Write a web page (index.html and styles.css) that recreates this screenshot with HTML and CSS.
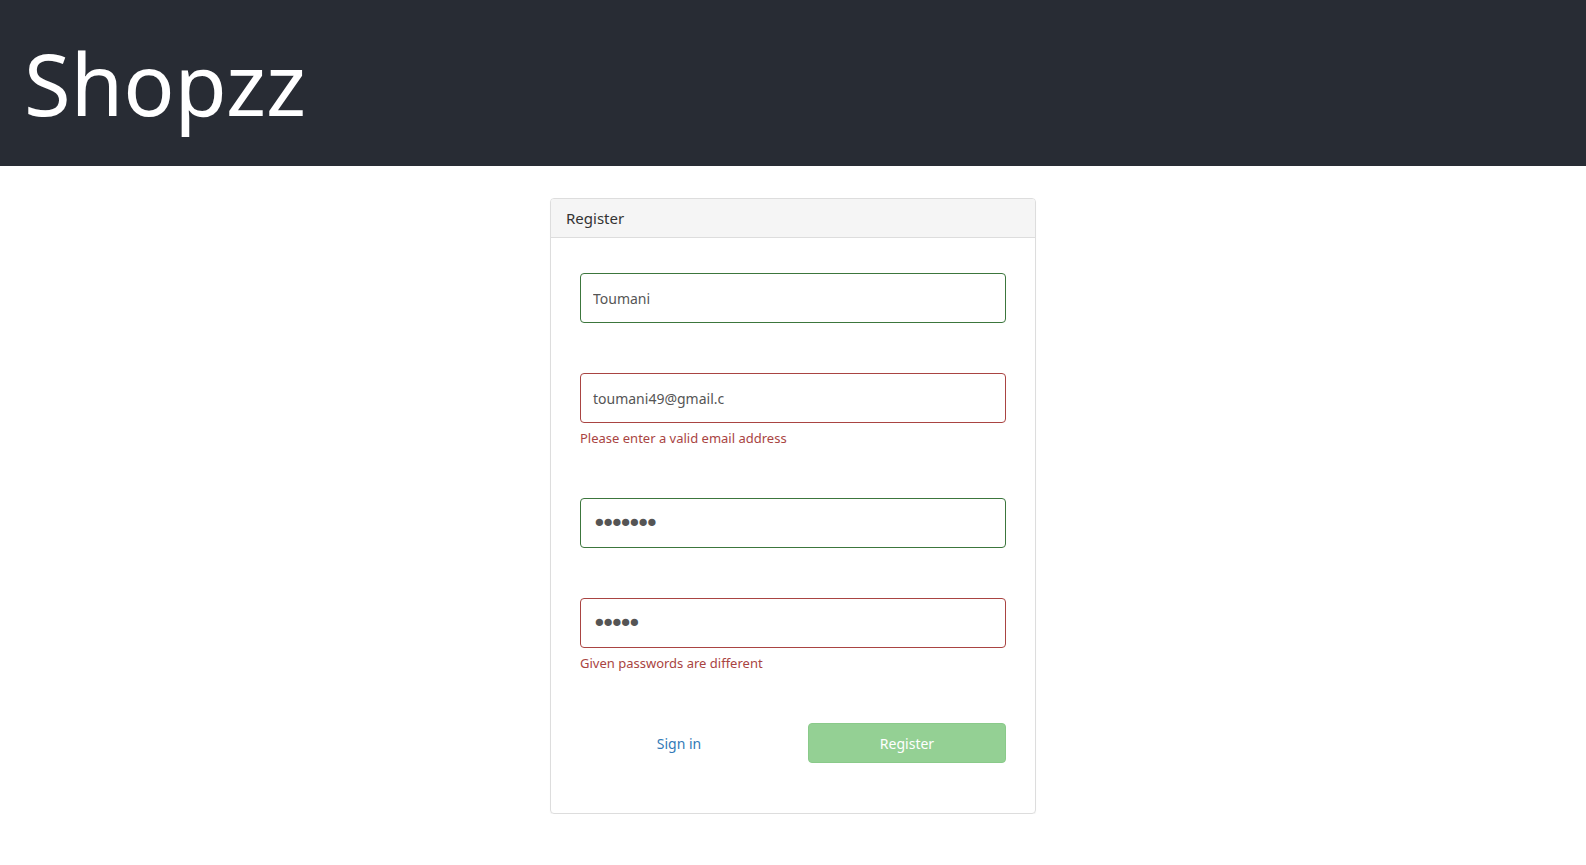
FILE: index.html
```html
<!DOCTYPE html>
<html lang="en">
<head>
    <meta charset="UTF-8">
    <meta name="viewport" content="width=device-width, initial-scale=1.0">
    <title>Shopzz</title>
    <link rel="stylesheet" href="styles.css">
</head>
<body>
    <header class="app-header">
        <h1 class="brand">Shopzz</h1>
    </header>
    <main class="page">
        <div class="panel">
            <div class="panel-heading">Register</div>
            <form class="panel-body">
                <div class="form-group">
                    <input class="form-control is-valid" type="text" value="Toumani">
                </div>
                <div class="form-group">
                    <input class="form-control is-invalid" type="email" value="toumani49@gmail.c">
                    <div class="error">Please enter a valid email address</div>
                </div>
                <div class="form-group">
                    <input class="form-control is-valid" type="password" value="1234567">
                </div>
                <div class="form-group">
                    <input class="form-control is-invalid" type="password" value="12345">
                    <div class="error">Given passwords are different</div>
                </div>
                <div class="actions">
                    <a class="link" href="#">Sign in</a>
                    <button class="btn-register" type="button" disabled>Register</button>
                </div>
            </form>
        </div>
    </main>
</body>
</html>
```

FILE: styles.css
```css
* {
    box-sizing: border-box;
}
html, body {
    margin: 0;
    font-family: "Noto Sans", "Open Sans", sans-serif;
    font-size: 14px;
    color: #333;
    background: #fff;
}
.app-header {
    background-color: #282c34;
    height: 166px;
    padding: 0 24px;
    display: flex;
    align-items: center;
}
.brand {
    margin: 0;
    color: #fff;
    font-weight: 400;
    font-size: 85px;
    line-height: 1;
}
.page {
    display: flex;
    justify-content: center;
    padding-top: 32px;
}
.panel {
    width: 486px;
    border: 1px solid #ddd;
    border-radius: 4px;
    box-shadow: 0 1px 1px rgba(0, 0, 0, .05);
}
.panel-heading {
    background-color: #f5f5f5;
    border-bottom: 1px solid #ddd;
    border-radius: 3px 3px 0 0;
    padding: 9px 15px;
    font-size: 15px;
    line-height: 20px;
}
.panel-body {
    padding: 35px 29px 50px;
}
.form-group {
    margin-bottom: 50px;
}
.form-control {
    display: block;
    width: 100%;
    height: 50px;
    padding: 0 12px;
    font-family: inherit;
    font-size: 14px;
    color: #555;
    border: 1px solid #ccc;
    border-radius: 4px;
    outline: none;
}
.form-control[type="password"] {
    font-family: "DejaVu Sans", sans-serif;
    font-size: 25px;
    letter-spacing: -6px;
    padding-left: 11px;
}
.form-control.is-valid {
    border-color: #3c763d;
}
.form-control.is-invalid {
    border-color: #a94442;
}
.error {
    color: #a94442;
    font-size: 13px;
    margin-top: 5px;
    line-height: 20px;
}
.actions {
    display: grid;
    grid-template-columns: 1fr 1fr;
    gap: 30px;
    align-items: center;
}
.link {
    color: #337ab7;
    text-align: center;
    text-decoration: none;
}
.btn-register {
    height: 40px;
    font-family: inherit;
    font-size: 14px;
    color: #fff;
    background-color: #5cb85c;
    border: 1px solid #4cae4c;
    border-radius: 4px;
    opacity: .65;
}
```
